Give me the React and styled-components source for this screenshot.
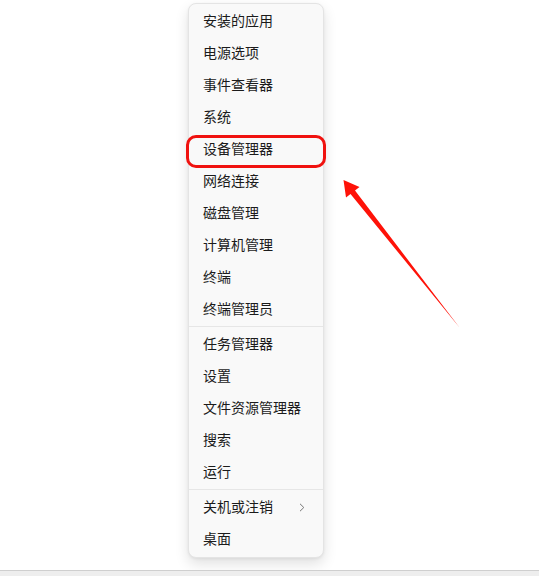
import React from "react";
import styled, { createGlobalStyle } from "styled-components";

const GlobalStyle = createGlobalStyle`
  html, body {
    margin: 0;
    padding: 0;
    background: #ffffff;
  }
  body {
    font-family: "Noto Sans CJK SC", "Noto Sans", sans-serif;
  }
`;

const groups = [
  ["安装的应用", "电源选项", "事件查看器", "系统", "设备管理器", "网络连接", "磁盘管理", "计算机管理", "终端", "终端管理员"],
  ["任务管理器", "设置", "文件资源管理器", "搜索", "运行"],
  ["关机或注销", "桌面"],
];

const Page = styled.div`
  position: relative;
  width: 539px;
  height: 576px;
  display: flex;
  flex-direction: column;
  overflow: hidden;
`;

const Stage = styled.div`
  flex: 1;
  display: flex;
  align-items: flex-start;
  padding: 3px 0 0 188px;
`;

const Menu = styled.div`
  width: 136px;
  box-sizing: border-box;
  background: #f9f9f9;
  border: 1px solid #e4e4e4;
  border-radius: 8px;
  padding: 1px 0 2px;
  box-shadow: 0 6px 14px rgba(0, 0, 0, 0.12), 0 1px 3px rgba(0, 0, 0, 0.06);
`;

const Row = styled.div`
  position: relative;
  height: 32px;
  box-sizing: border-box;
  padding: 0 18px 2px 14px;
  display: flex;
  align-items: center;
  justify-content: space-between;
  font-size: 14px;
  color: #1b1b1b;
  white-space: nowrap;

  ${(p) =>
    p.$highlighted &&
    `
    &::after {
      content: "";
      position: absolute;
      left: -3px;
      right: -3px;
      top: 2px;
      bottom: -3px;
      border: 3px solid #f0120f;
      border-radius: 10px;
      pointer-events: none;
    }
  `}
`;

const Separator = styled.div`
  height: 1px;
  margin: 1px 0;
  background: #e6e6e6;
`;

const Chevron = styled.svg`
  width: 6px;
  height: 9px;
  margin-top: 2px;
`;

const Taskbar = styled.div`
  height: 5px;
  background: #eeeeee;
  border-top: 1px solid #cfcfcf;
`;

const Annotation = styled.svg`
  position: absolute;
  top: 0;
  left: 0;
  width: 539px;
  height: 576px;
  pointer-events: none;
`;

export default function App() {
  return (
    <>
      <GlobalStyle />
      <Page>
        <Stage>
          <Menu>
            {groups.map((items, gi) => (
              <React.Fragment key={gi}>
                {gi > 0 && <Separator />}
                {items.map((label) => (
                  <Row key={label} $highlighted={label === "设备管理器"}>
                    <span>{label}</span>
                    {label === "关机或注销" && (
                      <Chevron viewBox="0 0 6 9">
                        <path d="M1 0.8 L4.8 4.5 L1 8.2" fill="none" stroke="#777" strokeWidth="1" />
                      </Chevron>
                    )}
                  </Row>
                ))}
              </React.Fragment>
            ))}
          </Menu>
        </Stage>
        <Taskbar />
        <Annotation viewBox="0 0 539 576">
          <polygon
            points="343.5,180 359.5,187 355,190.5 459.5,327.5 350.5,194 346,197.5"
            fill="#fe1208"
          />
        </Annotation>
      </Page>
    </>
  );
}
